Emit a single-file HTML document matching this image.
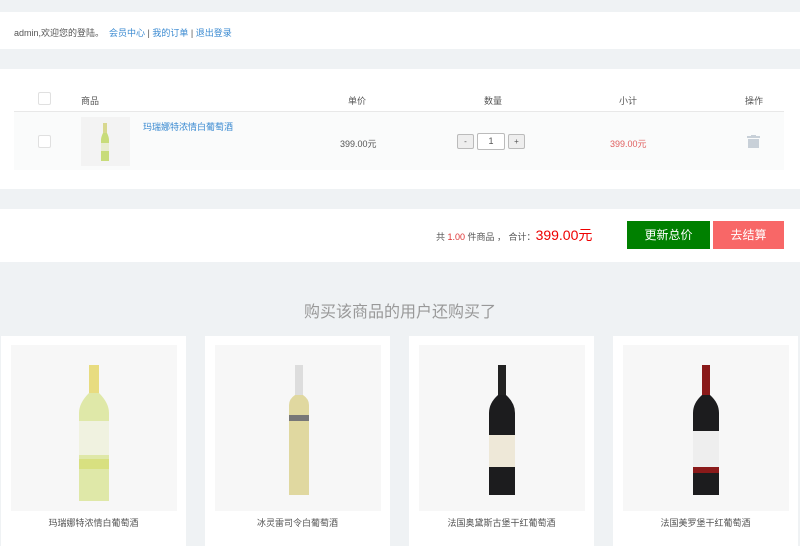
<!DOCTYPE html>
<html><head><meta charset="utf-8"><style>
*{margin:0;padding:0;box-sizing:border-box}
body{width:800px;height:534px;background:#eff2f4;font-family:"Liberation Sans","Noto Sans CJK SC",sans-serif;position:relative;overflow:hidden;font-size:9px;color:#555}
.abs{position:absolute}
a{color:#3a8ad1;text-decoration:none}
.cb{position:absolute;width:13px;height:13px;border:1px solid #e0e0e0;border-radius:2px;background:#fff}
.card{position:absolute;top:336px;width:185px;height:210px;background:#fff}
.card .img{position:absolute;left:10px;top:9px;width:166px;height:166px;background:#f7f7f7}
.card .t{position:absolute;top:180px;left:0;width:100%;text-align:center;font-size:9px;color:#555}
</style></head><body>
<div class="abs" style="left:0;top:12px;width:800px;height:37px;background:#fff"></div>
<div class="abs" style="left:14px;top:26px;color:#555">admin,欢迎您的登陆。 &nbsp;<a>会员中心</a> | <a>我的订单</a> | <a>退出登录</a></div>

<div class="abs" style="left:0;top:69px;width:800px;height:120px;background:#fff"></div>
<div class="cb" style="left:38px;top:92px"></div>
<div class="abs" style="left:81px;top:94px">商品</div>
<div class="abs" style="left:348px;top:94px">单价</div>
<div class="abs" style="left:484px;top:94px">数量</div>
<div class="abs" style="left:619px;top:94px">小计</div>
<div class="abs" style="left:745px;top:94px">操作</div>
<div class="abs" style="left:14px;top:111px;width:770px;height:1px;background:#e8e8e8"></div>
<div class="abs" style="left:14px;top:112px;width:770px;height:58px;background:#fafbfb"></div>
<div class="cb" style="left:38px;top:135px"></div>
<div class="abs" style="left:81px;top:117px;width:49px;height:49px;background:#f3f3f3"></div>
<svg class="abs" style="left:98px;top:121px" width="14" height="42" viewBox="0 0 14 42"><rect x="5" y="2" width="4" height="10" fill="#d8d890"/><path d="M5 12 Q3 16 3 19 L3 40 L11 40 L11 19 Q11 16 9 12Z" fill="#c8dc7a"/><rect x="3" y="22" width="8" height="8" fill="#e8ecd0"/></svg>
<div class="abs" style="left:143px;top:120px;color:#3a8ad1">玛瑞娜特浓情白葡萄酒</div>
<div class="abs" style="left:340px;top:137px">399.00元</div>
<div class="abs" style="left:457px;top:134px;width:17px;height:15px;border:1px solid #bbb;background:#eee;border-radius:2px;text-align:center;line-height:13px;font-size:8px">-</div>
<div class="abs" style="left:477px;top:133px;width:28px;height:17px;border:1px solid #bbb;background:#fff;border-radius:2px;text-align:center;line-height:15px">1</div>
<div class="abs" style="left:508px;top:134px;width:17px;height:15px;border:1px solid #bbb;background:#eee;border-radius:2px;text-align:center;line-height:13px;font-size:8px">+</div>
<div class="abs" style="left:610px;top:137px;color:#e06060">399.00元</div>
<svg class="abs" style="left:747px;top:135px" width="13" height="13" viewBox="0 0 13 13"><rect x="0" y="1" width="13" height="2" fill="#c8d0d8"/><rect x="4" y="0" width="5" height="2" fill="#c8d0d8"/><rect x="1" y="4" width="11" height="9" fill="#c8d0d8"/></svg>

<div class="abs" style="left:0;top:209px;width:800px;height:53px;background:#fff"></div>
<div class="abs" style="left:436px;top:225px;color:#555;white-space:nowrap">共 <span style="color:#d33">1.00</span> 件商品 ， 合计：<span style="color:#e00;font-size:14px">399.00元</span></div>
<div class="abs" style="left:627px;top:221px;width:83px;height:28px;background:#008000;color:#fff;font-size:12px;text-align:center;line-height:28px">更新总价</div>
<div class="abs" style="left:713px;top:221px;width:71px;height:28px;background:#f86767;color:#fff;font-size:12px;text-align:center;line-height:28px">去结算</div>

<div class="abs" style="left:0;top:298px;width:800px;text-align:center;font-size:16px;color:#999">购买该商品的用户还购买了</div>

<div class="card" style="left:1px"><div class="img"><svg style="position:absolute;left:66px;top:18px" width="34" height="140" viewBox="0 0 34 140"><rect x="12" y="2" width="10" height="28" fill="#e8dc80"/><path d="M12 30 Q2 40 2 50 L2 138 L32 138 L32 50 Q32 40 22 30Z" fill="#dfe8a8"/><rect x="2" y="58" width="30" height="34" fill="#f0f2e0"/><rect x="2" y="96" width="30" height="10" fill="#d8e080"/></svg></div><div class="t">玛瑞娜特浓情白葡萄酒</div></div>
<div class="card" style="left:205px"><div class="img"><svg style="position:absolute;left:72px;top:20px" width="24" height="132" viewBox="0 0 24 132"><rect x="8" y="0" width="8" height="30" fill="#ddd"/><path d="M8 30 Q2 34 2 40 L2 130 L22 130 L22 40 Q22 34 16 30Z" fill="#e0d8a0"/><rect x="2" y="50" width="20" height="6" fill="#777"/></svg></div><div class="t">冰灵雷司令白葡萄酒</div></div>
<div class="card" style="left:409px"><div class="img"><svg style="position:absolute;left:68px;top:20px" width="30" height="132" viewBox="0 0 30 132"><rect x="11" y="0" width="8" height="30" fill="#222"/><path d="M11 30 Q2 38 2 48 L2 130 L28 130 L28 48 Q28 38 19 30Z" fill="#1c1c1e"/><rect x="2" y="70" width="26" height="32" fill="#eee8d8"/></svg></div><div class="t">法国奥黛斯古堡干红葡萄酒</div></div>
<div class="card" style="left:613px"><div class="img"><svg style="position:absolute;left:68px;top:20px" width="30" height="132" viewBox="0 0 30 132"><rect x="11" y="0" width="8" height="30" fill="#8a1a1a"/><path d="M11 30 Q2 38 2 48 L2 130 L28 130 L28 48 Q28 38 19 30Z" fill="#1c1c1e"/><rect x="2" y="66" width="26" height="36" fill="#eee"/><rect x="2" y="102" width="26" height="6" fill="#8a1a1a"/></svg></div><div class="t">法国美罗堡干红葡萄酒</div></div>
</body></html>
